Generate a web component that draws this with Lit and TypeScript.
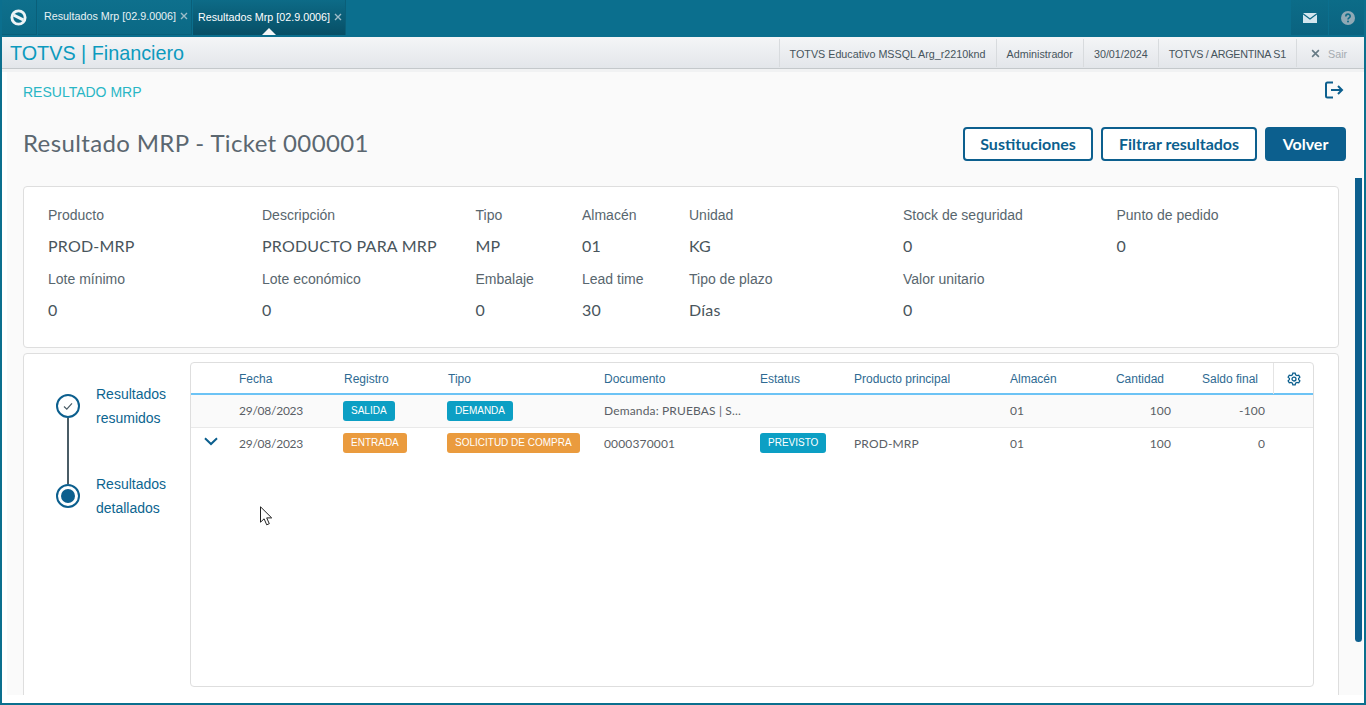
import { LitElement, html, css, svg } from "lit";
import { customElement } from "lit/decorators.js";

const INFO = [
  [
    ["Producto", "PROD-MRP"],
    ["Descripción", "PRODUCTO PARA MRP"],
    ["Tipo", "MP"],
    ["Almacén", "01"],
    ["Unidad", "KG"],
    ["Stock de seguridad", "0"],
    ["Punto de pedido", "0"],
  ],
  [
    ["Lote mínimo", "0"],
    ["Lote económico", "0"],
    ["Embalaje", "0"],
    ["Lead time", "30"],
    ["Tipo de plazo", "Días"],
    ["Valor unitario", "0"],
  ],
];

const closeIcon = svg`<path d="M1 1l6 6M7 1L1 7" stroke="currentColor" stroke-width="1.4" fill="none"/>`;

@customElement("app-root")
export class AppRoot extends LitElement {
  static styles = css`
    :host {
      display: flex;
      flex-direction: column;
      position: relative;
      width: 1366px;
      height: 705px;
      overflow: hidden;
      box-sizing: border-box;
      border: 2px solid #0b6f8e;
      border-top: 0;
      background: #fff;
      font-family: "Liberation Sans", Arial, sans-serif;
    }
    * {
      box-sizing: border-box;
    }
    .topbar {
      height: 37px;
      margin: 0 -2px;
      background: #0b6f8e;
      display: flex;
      flex: none;
    }
    .logo {
      width: 37px;
      height: 35px;
      margin-right: 1px;
      padding-left: 1px;
      display: flex;
      align-items: center;
      justify-content: center;
      background: linear-gradient(#0e708d, #0b6985);
      border-right: 1px solid #0a5f79;
      border-bottom: 1px solid #0a5f79;
    }
    .tab {
      width: 154px;
      height: 35px;
      padding: 9px 0 0 6px;
      margin-right: 1px;
      display: flex;
      gap: 4px;
      color: #e8f1f4;
      font-size: 10.75px;
      line-height: 14px;
      white-space: nowrap;
      position: relative;
      background: linear-gradient(#0e708d, #0b6985);
      border-right: 1px solid #0a5f79;
      border-bottom: 1px solid #0a5f79;
    }
    .tab svg {
      margin-top: 3px;
      color: #9dbcc8;
    }
    .tab.active {
      background: linear-gradient(#0d6b87, #074f66);
      color: #fff;
      width: 153px;
      padding: 10px 0 0 5px;
      border-bottom: 0;
    }
    .tab.active::after {
      content: "";
      position: absolute;
      left: 69px;
      bottom: 0;
      border: 7px solid transparent;
      border-top: 0;
      border-bottom-color: #f4f6f7;
    }
    .spacer {
      flex: 1;
    }
    .tool {
      width: 37px;
      height: 35px;
      margin-left: 1px;
      display: flex;
      align-items: center;
      justify-content: center;
      background: linear-gradient(#0c6c88, #0a6380);
    }
    .header {
      height: 32px;
      flex: none;
      display: flex;
      align-items: center;
      padding-left: 8px;
      background: linear-gradient(#f4f5f7, #e3e6ea);
      border-bottom: 1px solid #c4c8cb;
      box-shadow: 0 3px 0 #f1f2f3;
    }
    .brand {
      font-size: 19.8px;
      padding-top: 1px;
      color: #0c9abe;
      flex: 1;
    }
    .meta {
      height: 28px;
      padding: 0 10px;
      border-left: 1px solid #d8dbde;
      font-size: 10.75px;
      line-height: 30px;
      color: #46545c;
      white-space: nowrap;
    }
    .meta.tight {
      letter-spacing: -0.25px;
    }
    .meta.exit {
      width: 68px;
      padding: 2px 0 0 14px;
      color: #a5abb0;
      display: flex;
      align-items: center;
      gap: 8px;
    }
    .meta.exit svg {
      color: #667a85;
      stroke-width: 2;
    }
    .page {
      flex: 1;
      min-height: 0;
      margin: 3px 1px 8px 5px;
      padding: 0 24px 0 16px;
      background: #fafafa;
      overflow: hidden;
      position: relative;
    }
    .crumbs {
      display: flex;
      justify-content: space-between;
      height: 44px;
      padding-top: 10px;
      font-size: 14px;
      line-height: 20px;
      color: #29b6c5;
    }
    .crumbs svg {
      margin: -2px -5px 0 0;
    }
    .title-row {
      display: flex;
      align-items: center;
      justify-content: space-between;
      height: 34px;
      margin-top: 11px;
      margin-right: -7px;
    }
    h1 {
      margin: -2px 0 0;
      font: 400 24px/32px Lato, sans-serif;
      letter-spacing: 0.36px;
      color: #5b6770;
    }
    .actions {
      display: flex;
      gap: 8px;
    }
    button {
      height: 34px;
      border-radius: 4px;
      border: 2px solid #0c5f8e;
      background: #fff;
      color: #0c5f8e;
      font: 700 16px Lato, sans-serif;
      padding: 0 0 2px;
    }
    button.sub {
      width: 130px;
    }
    button.filter {
      width: 156px;
    }
    button.primary {
      width: 81px;
      background: #0c5f8e;
      color: #fff;
    }
    .card {
      background: #fff;
      border: 1px solid #dedede;
      border-radius: 4px;
    }
    .info {
      margin-top: 25px;
      height: 162px;
      padding: 16px 24px 0;
    }
    .info-row {
      display: grid;
      grid-template-columns: 214px 213.5px 106.5px 107px 214px 213.5px 1fr;
      height: 64px;
    }
    .label {
      font-size: 14px;
      line-height: 24px;
      color: #58666e;
    }
    .value {
      font: 400 16px/24px Lato, sans-serif;
      letter-spacing: 0.2px;
      margin-top: 7px;
      color: #49555c;
    }
    .results {
      margin-top: 5px;
      height: 400px;
      display: flex;
      padding: 8px 24px 0 0;
    }
    .steps {
      width: 166px;
      flex: none;
      padding: 20px 0 0 32px;
    }
    .step {
      display: flex;
      height: 90px;
      position: relative;
      gap: 16px;
    }
    .dot {
      width: 24px;
      height: 24px;
      flex: none;
      border: 2px solid #0c5f8e;
      border-radius: 50%;
      margin-top: 12px;
      background: #fff;
      display: flex;
      align-items: center;
      justify-content: center;
      position: relative;
      z-index: 1;
    }
    .dot i {
      width: 14px;
      height: 14px;
      border-radius: 50%;
      background: #0c5f8e;
    }
    .line {
      position: absolute;
      left: 11px;
      top: 36px;
      width: 2px;
      height: 66px;
      background: #4a5c66;
    }
    .step-text {
      font-size: 14px;
      line-height: 24px;
      color: #0c6590;
    }
    .table {
      width: 1124px;
      height: 325px;
      background: #fff;
      border: 1px solid #dedede;
      border-radius: 4px;
      overflow: hidden;
    }
    .row {
      display: grid;
      grid-template-columns: 48px 104px 104px 157px 156px 94px 156px 97px 64px 94px 1fr;
      align-items: center;
    }
    .head {
      height: 32px;
      border-bottom: 2px solid #6cc3f5;
      font-size: 12px;
      color: #2e6a92;
    }
    .head .pad {
      padding-left: 1px;
    }
    .body-a {
      height: 33px;
      background: #fafafa;
      border-bottom: 1px solid #e9e9e9;
    }
    .body-b {
      height: 33px;
      align-items: start;
      padding-top: 5px;
    }
    .cell {
      font: 400 12px/16px Lato, sans-serif;
      letter-spacing: 0.15px;
      color: #5b5f66;
      white-space: nowrap;
    }
    .cell.date {
      letter-spacing: -0.25px;
    }
    .body-b .cell {
      padding-top: 3px;
    }
    .num {
      text-align: right;
    }
    .head .num {
      padding-right: 7px;
    }
    .gear {
      height: 31px;
      margin-left: 8px;
      border-left: 1px solid #e4e4e4;
      display: flex;
      align-items: center;
      justify-content: center;
    }
    .tag {
      display: block;
      width: fit-content;
      height: 20px;
      border-radius: 3px;
      padding: 0 8px;
      font: 400 10px/20px "Liberation Sans", sans-serif;
      color: #fff;
      background: #0c9fc4;
    }
    .tag.orange {
      background: #ea9b3e;
    }
    .chev {
      display: flex;
      justify-content: center;
      margin-left: -9px;
      padding-top: 4px;
    }
    .thumb {
      position: absolute;
      right: 1px;
      top: 106px;
      width: 7px;
      height: 464px;
      border-radius: 0 0 4px 4px;
      background: #0c5f8e;
    }
    .cursor {
      position: absolute;
      left: 257px;
      top: 506px;
    }
  `;

  render() {
    return html`
      <div class="topbar">
        <div class="logo">
          <svg width="17" height="17" viewBox="0 0 18 18" fill="none" stroke="#eef4f6">
            <circle cx="9" cy="9" r="7" stroke-width="3" />
            <path d="M4 6.500L14 11.500" stroke-width="3" />
          </svg>
        </div>
        <div class="tab">
          Resultados Mrp [02.9.0006]
          <svg width="8" height="8" viewBox="0 0 8 8">${closeIcon}</svg>
        </div>
        <div class="tab active">
          Resultados Mrp [02.9.0006]
          <svg width="8" height="8" viewBox="0 0 8 8">${closeIcon}</svg>
        </div>
        <div class="spacer"></div>
        <div class="tool">
          <svg width="14" height="10" viewBox="0 0 14 10">
            <path d="M0 0h14L7 5.200z" fill="#d4e6ee" />
            <path d="M0 1.400V10h14V1.400L7 6.700z" fill="#d4e6ee" />
          </svg>
        </div>
        <div class="tool">
          <svg width="14" height="14" viewBox="0 0 14 14">
            <circle cx="7" cy="7" r="7" fill="#8fa9b5" />
            <path d="M4.800 5.400c0-3 4.400-3 4.400-.2 0 1.700-2.200 1.700-2.200 3.300" stroke="#0e6b87" stroke-width="1.600" fill="none" />
            <circle cx="7" cy="10.600" r="1" fill="#0e6b87" />
          </svg>
        </div>
      </div>
      <div class="header">
        <div class="brand">TOTVS | Financiero</div>
        <div class="meta">TOTVS Educativo MSSQL Arg_r2210knd</div>
        <div class="meta">Administrador</div>
        <div class="meta">30/01/2024</div>
        <div class="meta tight">TOTVS / ARGENTINA S1</div>
        <div class="meta exit">
          <svg width="9" height="9" viewBox="0 0 8 8">${closeIcon}</svg>Sair
        </div>
      </div>
      <div class="page">
        <div class="crumbs">
          RESULTADO MRP
          <svg width="20" height="20" viewBox="0 0 20 20" fill="none" stroke="#0c5f8e" stroke-width="2">
            <path d="M9 2.500H3.500A1.500 1.500 0 0 0 2 4v12a1.500 1.500 0 0 0 1.500 1.500H9" />
            <path d="M7 10H18M14 6l4 4-4 4" />
          </svg>
        </div>
        <div class="title-row">
          <h1>Resultado MRP - Ticket 000001</h1>
          <div class="actions">
            <button class="sub">Sustituciones</button>
            <button class="filter">Filtrar resultados</button>
            <button class="primary">Volver</button>
          </div>
        </div>
        <div class="card info">
          ${INFO.map(
            (row) => html`<div class="info-row">
              ${row.map(
                ([l, v]) => html`<div>
                  <div class="label">${l}</div>
                  <div class="value">${v}</div>
                </div>`
              )}
            </div>`
          )}
        </div>
        <div class="card results">
          <div class="steps">
            <div class="step">
              <div class="dot">
                <svg width="12" height="12" viewBox="0 0 12 12" fill="none" stroke="#4a5c66" stroke-width="1.200">
                  <path d="M2 6.500l2.800 2.600L10 3.400" />
                </svg>
              </div>
              <div class="line"></div>
              <div class="step-text">Resultados<br />resumidos</div>
            </div>
            <div class="step">
              <div class="dot"><i></i></div>
              <div class="step-text">Resultados<br />detallados</div>
            </div>
          </div>
          <div class="table">
            <div class="row head">
              <div></div>
              <div>Fecha</div>
              <div class="pad">Registro</div>
              <div class="pad">Tipo</div>
              <div>Documento</div>
              <div>Estatus</div>
              <div>Producto principal</div>
              <div>Almacén</div>
              <div class="num">Cantidad</div>
              <div class="num">Saldo final</div>
              <div class="gear">
                <svg width="14" height="14" viewBox="0 0 24 24" fill="none" stroke="#0c5f8e" stroke-width="2.200">
                  <circle cx="12" cy="12" r="3.400" />
                  <path d="M10 2h4l.7 3 2.400 1.300 3-.9 2 3.400-2.200 2.200v2l2.200 2.200-2 3.400-3-.9L14.700 19 14 22h-4l-.7-3-2.400-1.300-3 .9-2-3.400 2.200-2.200v-2L1.900 8.800l2-3.400 3 .9L9.300 5z" />
                </svg>
              </div>
            </div>
            <div class="row body-a">
              <div></div>
              <div class="cell date">29/08/2023</div>
              <div><span class="tag">SALIDA</span></div>
              <div><span class="tag">DEMANDA</span></div>
              <div class="cell">Demanda: PRUEBAS | S...</div>
              <div></div>
              <div></div>
              <div class="cell">01</div>
              <div class="cell num">100</div>
              <div class="cell num">-100</div>
              <div></div>
            </div>
            <div class="row body-b">
              <div class="chev">
                <svg width="14" height="9" viewBox="0 0 14 9" fill="none" stroke="#0c5f8e" stroke-width="2">
                  <path d="M1 1.200L7 7l6-5.800" />
                </svg>
              </div>
              <div class="cell date">29/08/2023</div>
              <div><span class="tag orange">ENTRADA</span></div>
              <div><span class="tag orange">SOLICITUD DE COMPRA</span></div>
              <div class="cell">0000370001</div>
              <div><span class="tag">PREVISTO</span></div>
              <div class="cell">PROD-MRP</div>
              <div class="cell">01</div>
              <div class="cell num">100</div>
              <div class="cell num">0</div>
              <div></div>
            </div>
          </div>
        </div>
        <div class="thumb"></div>
      </div>
      <svg class="cursor" width="14" height="20" viewBox="0 0 14 20">
        <path d="M1.500 .8v15.400l3.600-3.400 2.600 6 2.600-1.100-2.600-5.800h5z" fill="#fff" stroke="#222" stroke-width="1" />
      </svg>
    `;
  }
}
